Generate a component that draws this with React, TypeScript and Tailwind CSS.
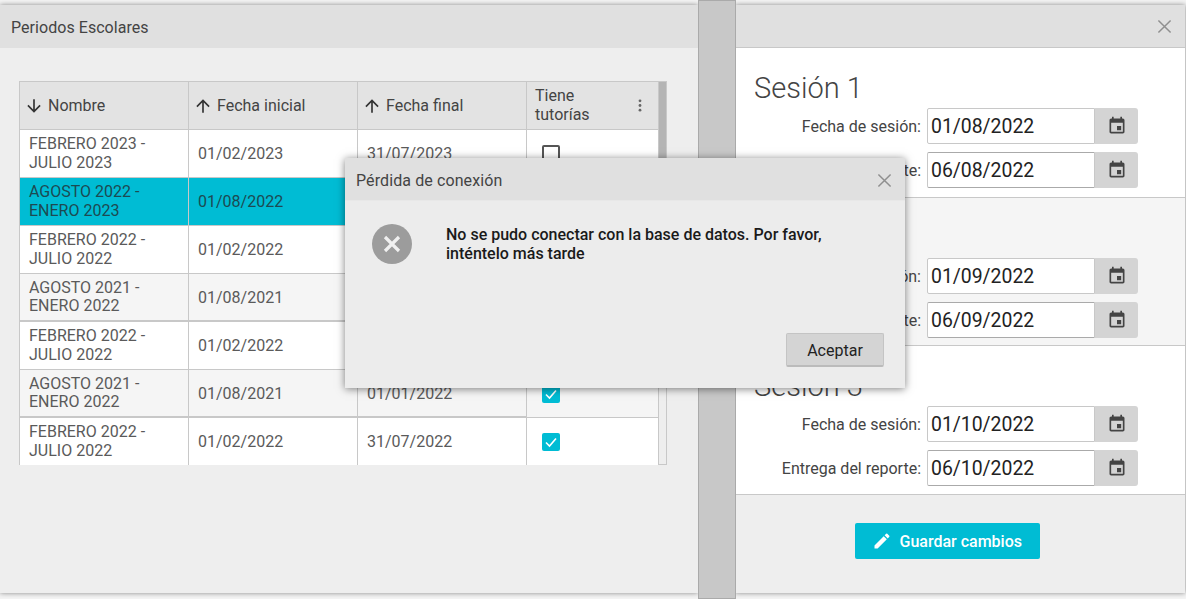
import React from "react";

const font = { fontFamily: "Roboto, 'Liberation Sans', sans-serif" };

function X({ className }: { className: string }) {
  return (
    <svg viewBox="0 0 16 16" className={className} fill="none" stroke="#8f8f8f" strokeWidth="1.6">
      <path d="M1.5 1.5 14.5 14.5M14.5 1.5 1.5 14.5" />
    </svg>
  );
}

function Arrow({ down }: { down?: boolean }) {
  return (
    <svg viewBox="0 0 24 24" className={"w-[20px] h-[20px] shrink-0 fill-[#333] " + (down ? "rotate-180" : "")}>
      <path d="M4 12l1.41 1.41L11 7.83V20h2V7.83l5.58 5.59L20 12l-8-8-8 8z" />
    </svg>
  );
}

function Cal() {
  return (
    <svg viewBox="0 0 24 24" className="w-[20px] h-[20px] fill-[#444]">
      <path d="M17 12h-5v5h5v-5zM16 1v2H8V1H6v2H5c-1.11 0-1.99.9-1.99 2L3 19c0 1.1.89 2 2 2h14c1.1 0 2-.9 2-2V5c0-1.1-.9-2-2-2h-1V1h-2zm3 18H5V8h14v11z" />
    </svg>
  );
}

function Check({ on }: { on: boolean }) {
  if (!on) return <div className="w-[18px] h-[18px] rounded-[2px] border-2 border-[#555] bg-white" />;
  return (
    <div className="w-[18px] h-[18px] rounded-[2px] bg-[#00bcd4] flex items-center justify-center">
      <svg viewBox="0 0 18 18" className="w-[18px] h-[18px]" fill="none" stroke="#fff" strokeWidth="1.6">
        <path d="M4 9.5 7.5 13 14 5.5" />
      </svg>
    </div>
  );
}

const rows = [
  ["FEBRERO 2023 -", "JULIO 2023", "01/02/2023", "31/07/2023", false],
  ["AGOSTO 2022 -", "ENERO 2023", "01/08/2022", "", false],
  ["FEBRERO 2022 -", "JULIO 2022", "01/02/2022", "", false],
  ["AGOSTO 2021 -", "ENERO 2022", "01/08/2021", "", false],
  ["FEBRERO 2022 -", "JULIO 2022", "01/02/2022", "", false],
  ["AGOSTO 2021 -", "ENERO 2022", "01/08/2021", "01/01/2022", true],
  ["FEBRERO 2022 -", "JULIO 2022", "01/02/2022", "31/07/2022", true],
] as const;

const cols = "grid grid-cols-[169px_169px_169px_131px]";

function HeadCell({ label, down }: { label: string; down?: boolean }) {
  return (
    <div className="flex items-center gap-[4px] pl-[4px] border-r border-[#c8c8c8] text-[16px] text-[#444]">
      <Arrow down={down} />
      <span>{label}</span>
    </div>
  );
}

function Table() {
  return (
    <div className="ml-[19px] mt-[33px] w-[648px] h-[384px] border border-[#c8c8c8] border-b-0 flex overflow-hidden">
      <div className="w-[638px] shrink-0 flex flex-col">
        <div className={cols + " h-[48px] shrink-0 bg-[#e3e3e3] border-b border-[#c8c8c8]"}>
          <HeadCell label="Nombre" down />
          <HeadCell label="Fecha inicial" />
          <HeadCell label="Fecha final" />
          <div className="flex items-center justify-between pl-[8px] pr-[16px] text-[16px] leading-[19px] text-[#444]">
            <span className="pb-[2px]">
              Tiene
              <br />
              tutorías
            </span>
            <svg viewBox="0 0 4 14" className="w-[4px] h-[13px] fill-[#666]">
              <circle cx="2" cy="2" r="1.5" />
              <circle cx="2" cy="7" r="1.5" />
              <circle cx="2" cy="12" r="1.5" />
            </svg>
          </div>
        </div>
        {rows.map((r, i) => {
          const sel = i === 1;
          const thick = i === 3 || i === 5;
          const bg = sel ? "bg-[#00bcd4]" : i % 2 === 0 ? "bg-white" : "bg-[#f5f5f5]";
          const text = sel ? "text-[#1d4a52]" : "text-[#5a5a5a]";
          const cell =
            "flex items-center pl-[9px] text-[16px] border-r border-[#c8c8c8] " + (thick ? "border-b-2" : "border-b");
          return (
            <div key={i} className={cols + " h-[48px] shrink-0 " + bg + " " + text}>
              <div className={cell + " leading-[18.5px]"}>
                <span>
                  {r[0]}
                  <br />
                  {r[1]}
                </span>
              </div>
              <div className={cell}>
                <span className="pt-[1px]">{r[2]}</span>
              </div>
              <div className={cell}>
                <span className="pt-[1px]">{r[3]}</span>
              </div>
              <div className="flex items-center pl-[15px] border-b border-[#c8c8c8]">
                <Check on={r[4]} />
              </div>
            </div>
          );
        })}
      </div>
      <div className="w-[8px] h-full bg-[#eeeeee] border-l border-b border-[#c8c8c8]">
        <div className="h-[290px] bg-[#b4b4b4]" />
      </div>
    </div>
  );
}

function DateRow({ label, value, focus }: { label: string; value: string; focus?: boolean }) {
  return (
    <div className="flex items-center h-[36px]">
      <div className="w-[173px] pr-[6px] pt-[2px] text-right text-[16px] text-[#444] shrink-0">{label}</div>
      <div
        className={
          "w-[168px] h-[36px] bg-white rounded-l-[2px] border border-[#c8c8c8] pl-[3px] pt-[2px] flex items-center text-[19.4px] text-[#222] " +
          (focus ? "border-t-[#aaa] border-b-[#aaa]" : "")
        }
      >
        {value}
      </div>
      <div className="w-[43px] h-[36px] bg-[#d4d4d4] rounded-r-[3px] flex items-center justify-center">
        <Cal />
      </div>
    </div>
  );
}

function Session({ n, a, b, h }: { n: number; a: string; b: string; h: string }) {
  return (
    <div className={"pl-[19px] border-b border-[#c8c8c8] pt-[21px] " + h}>
      <div className="text-[29px] leading-[38px] mb-[1px] font-light text-[#444]">Sesión {n}</div>
      <div className="flex flex-col gap-[8px]">
        <DateRow label="Fecha de sesión:" value={a} />
        <DateRow label="Entrega del reporte:" value={b} focus />
      </div>
    </div>
  );
}

export default function App() {
  return (
    <div style={font} className="relative w-[1186px] h-[599px] overflow-hidden bg-[#f4f4f4] flex">
      <div className="w-[698px] shrink-0 mt-[5px] mb-[6px] bg-[#eeeeee] shadow-[0_0_5px_rgba(0,0,0,0.45)]">
        <div className="h-[43px] bg-[#e0e0e0] pl-[11px] pt-[3px] flex items-center text-[16px] tracking-[0.05px] text-[#444]">
          Periodos Escolares
        </div>
        <Table />
      </div>
      <div className="w-[38px] shrink-0 h-[599px] bg-[#c8c8c8] border border-[#aaaaaa] relative z-10" />
      <div className="w-[450px] shrink-0 mt-[5px] mb-[6px] bg-[#eeeeee] shadow-[0_0_5px_rgba(0,0,0,0.45)] -ml-[1px] flex flex-col">
        <div className="h-[43px] shrink-0 bg-[#e0e0e0] border-b border-[#c8c8c8] flex items-center justify-end pr-[13px]">
          <X className="w-[15px] h-[15px]" />
        </div>
        <Session n={1} a="01/08/2022" b="06/08/2022" h="bg-white h-[150px]" />
        <Session n={2} a="01/09/2022" b="06/09/2022" h="bg-[#f5f5f5] h-[148px]" />
        <Session n={3} a="01/10/2022" b="06/10/2022" h="bg-white h-[149px]" />
        <div className="flex justify-center pt-[28px] pr-[26px]">
          <div className="w-[185px] h-[36px] bg-[#00bcd4] rounded-[2px] flex items-center pl-[17px] gap-[8px] text-[16px] font-medium text-white">
            <svg viewBox="0 0 24 24" className="w-[20px] h-[20px] fill-white">
              <path d="M3 17.25V21h3.75L17.81 9.94l-3.75-3.75L3 17.25zM20.71 7.04a1 1 0 0 0 0-1.41l-2.34-2.34a1 1 0 0 0-1.41 0l-1.83 1.83 3.75 3.75 1.83-1.83z" />
            </svg>
            <span className="pt-[2px]">Guardar cambios</span>
          </div>
        </div>
      </div>

      <div className="absolute z-20 left-[345px] top-[158px] w-[560px] h-[230px] bg-[#ececec] shadow-[0_1px_8px_rgba(0,0,0,0.5)] flex flex-col">
        <div className="h-[43px] shrink-0 bg-[#e0e0e0] border-b border-[#e8e8e8] pl-[11px] pr-[13px] pt-[2px] flex items-center justify-between text-[16px] tracking-[0.1px] text-[#444]">
          <span className="pt-[2px]">Pérdida de conexión</span>
          <X className="w-[15px] h-[15px]" />
        </div>
        <div className="flex flex-1 pl-[27px] pt-[23px]">
          <div className="w-[40px] h-[40px] rounded-full bg-[#9c9c9c] flex items-center justify-center shrink-0">
            <svg viewBox="0 0 20 20" className="w-[20px] h-[20px]" fill="none" stroke="#f0f0f0" strokeWidth="3.2">
              <path d="M3 3 17 17M17 3 3 17" />
            </svg>
          </div>
          <div className="ml-[34px] w-[420px] pt-[1px] text-[16px] leading-[19px] font-medium text-[#1a1a1a]">
            No se pudo conectar con la base de datos. Por favor, inténtelo más tarde
          </div>
        </div>
        <div className="flex justify-end pr-[21px] pb-[21px]">
          <div className="w-[98px] h-[34px] pt-[2px] rounded-[2px] bg-[#d4d4d4] border border-[#c4c4c4] border-b-2 border-b-[#bbbbbb] flex items-center justify-center text-[16px] text-[#222]">
            Aceptar
          </div>
        </div>
      </div>
    </div>
  );
}
